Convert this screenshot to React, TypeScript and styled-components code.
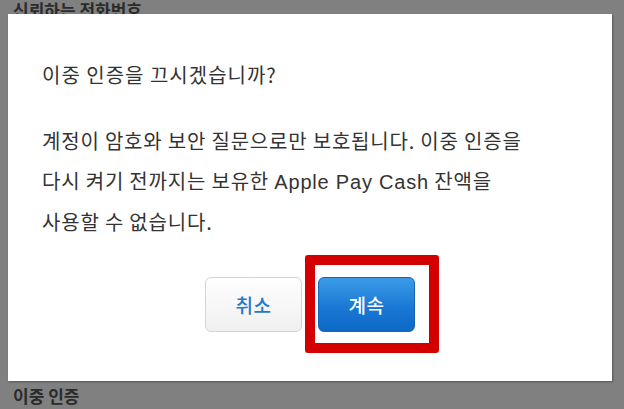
import React from 'react';
import styled, {createGlobalStyle} from 'styled-components';

const GlobalStyle = createGlobalStyle`
    html, body {
        margin: 0;
        padding: 0;
    }
    body {
        font-family: "Noto Sans CJK KR", "Noto Sans", sans-serif;
    }`;

const Page = styled.div`
    position: relative;
    width: 624px;
    height: 409px;
    overflow: hidden;
    background: #808080;
    display: flex;
    flex-direction: column;
    justify-content: space-between;
    padding: 0 0 2px 13px;
    box-sizing: border-box;`;

const SectionTitle = styled.div<{ $top?: number }>`
    margin-top: ${p => p.$top ?? 0}px;
    font-size: 17px;
    font-weight: 700;
    color: #2b2b2b;
    line-height: 22px;`;

const Modal = styled.div`
    position: absolute;
    top: 14px;
    left: 8px;
    width: 604px;
    height: 367px;
    background: #ffffff;
    box-shadow: 1px 1px 2px rgba(0, 0, 0, 0.35);
    padding: 47px 0 0 34px;
    box-sizing: border-box;
    display: flex;
    flex-direction: column;`;

const Title = styled.div`
    font-size: 20px;
    letter-spacing: 1px;
    color: #333333;
    line-height: 27px;`;

const Body = styled.p`
    margin: 33px 0 0 0;
    font-size: 20px;
    letter-spacing: 0.8px;
    color: #333333;
    line-height: 40px;`;

const Latin = styled.span`
    font-family: "Liberation Sans", "Noto Sans CJK KR", sans-serif;`;

const ButtonRow = styled.div`
    margin-top: 35px;
    margin-left: -34px;
    display: flex;
    justify-content: center;
    gap: 16px;`;

const Button = styled.div<{ $primary?: boolean }>`
    position: relative;
    width: 97px;
    height: 55px;
    box-sizing: border-box;
    border-radius: 6px;
    display: flex;
    align-items: center;
    justify-content: center;
    font-size: 19px;
    font-weight: 500;
    letter-spacing: 0.5px;
    color: ${p => p.$primary ? '#ffffff' : '#2479cf'};
    background: ${p => p.$primary
        ? 'linear-gradient(#3c9be8, #1a78d4 55%, #0d68c6)'
        : 'linear-gradient(#fefefe, #f0f0f0)'};
    border: 1px solid ${p => p.$primary ? '#1465ba' : '#d4d4d4'};`;

const Highlight = styled.div`
    position: absolute;
    top: -23px;
    left: -14px;
    width: 134px;
    height: 98px;
    box-sizing: border-box;
    border: 10px solid #d40000;
    border-radius: 3px;`;

export default function App() {
    return (<>
        <GlobalStyle />
        <Page>
            <SectionTitle $top={-1}>신뢰하는 전화번호</SectionTitle>
            <SectionTitle>이중 인증</SectionTitle>
            <Modal>
                <Title>이중 인증을 끄시겠습니까?</Title>
                <Body>
                    계정이 암호와 보안 질문으로만 보호됩니다. 이중 인증을<br />
                    다시 켜기 전까지는 보유한 <Latin>Apple Pay Cash</Latin> 잔액을<br />
                    사용할 수 없습니다.
                </Body>
                <ButtonRow>
                    <Button>취소</Button>
                    <Button $primary>
                        계속
                        <Highlight />
                    </Button>
                </ButtonRow>
            </Modal>
        </Page>
    </>);
}
